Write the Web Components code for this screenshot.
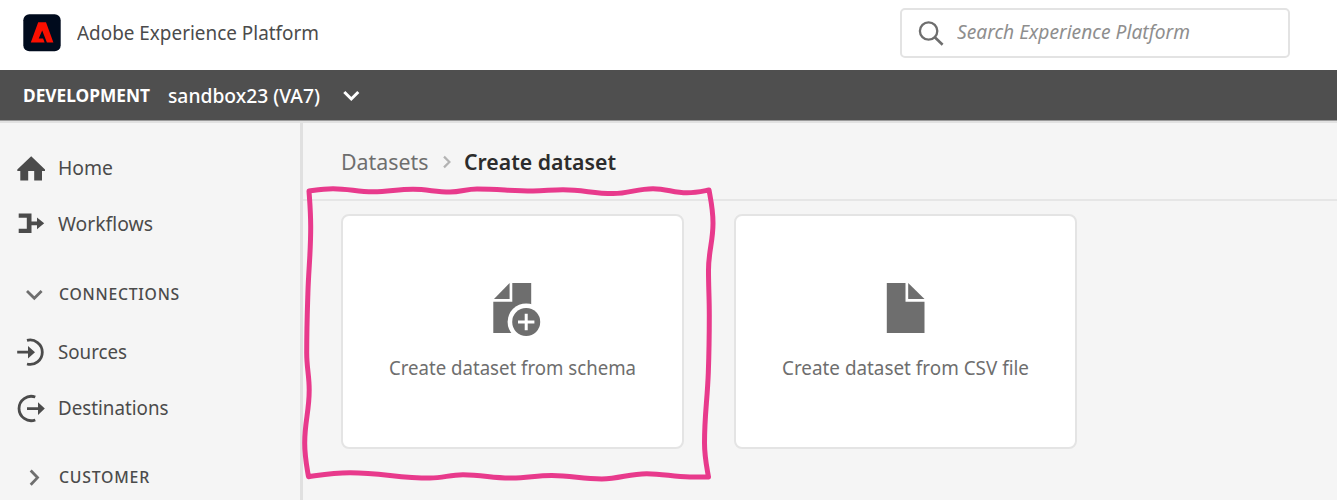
<!DOCTYPE html>
<html lang="en">
<head>
<meta charset="utf-8">
<title>Adobe Experience Platform</title>
<style>
html,body{margin:0;height:501px;overflow:hidden;background:#fff}
body{font-family:"Noto Sans","Open Sans",sans-serif;color:#4b4b4b}
</style>
</head>
<body>
<platform-app></platform-app>
<script>
const define = (name, html, setup) => {
  const t = document.createElement('template');
  t.innerHTML = html;
  customElements.define(name, class extends HTMLElement {
    constructor() {
      super();
      this.attachShadow({mode: 'open'}).append(t.content.cloneNode(true));
    }
    connectedCallback() { if (setup) setup(this, this.shadowRoot); }
  });
};

// A single-line label condensed to an exact advance width.
define('fit-text', `<style>
  :host{display:block;flex:none;white-space:nowrap;line-height:30px;height:30px}
  span{display:inline-block;transform-origin:0 50%}
</style><span><slot></slot></span>`, (el, root) => {
  const s = root.querySelector('span'), w = +el.getAttribute('w');
  el.style.width = w + 'px';
  s.style.transform = 'scaleX(' + w / s.getBoundingClientRect().width + ')';
});

define('app-header', `<style>
  :host{display:flex;height:70px;background:#fff;box-sizing:border-box;padding:0 47px 0 23px;align-items:flex-start}
  .logo{display:block;margin-top:14px}
  .name{margin:18px 0 0 16px;font-size:20px;color:#4b4b4b}
  .search{margin:8px 0 0 auto;width:390px;height:50px;box-sizing:border-box;border:2px solid #e3e3e3;border-radius:5px;display:flex}
  .search svg{margin:9px 0 0 15px}
  .search fit-text{margin:7px 0 0 12px;font-size:19.8px;font-style:italic;color:#8e8e8e}
</style>
<svg class="logo" width="38" height="38" viewBox="23 14 38 38"><rect x="23.3" y="14.3" width="37.4" height="37" rx="6" fill="#000b1d"/><path fill="#fa0f00" d="M38.2 22.3H46L53.4 42.4H46.9L42.2 30.5L38.7 38.4H43.1L44.6 42.4H30.8Z"/></svg>
<fit-text class="name" w="242">Adobe Experience Platform</fit-text>
<div class="search"><svg width="28" height="28" viewBox="917 19 28 28" fill="none" stroke="#6e6e6e" stroke-width="2.3"><circle cx="928.6" cy="31" r="8.7"/><path d="M934.8 37.2L942.6 44.8" stroke-width="2.6"/></svg><fit-text w="233">Search Experience Platform</fit-text></div>`);

define('sandbox-bar', `<style>
  :host{display:flex;height:50px;align-items:center;background:#4f4f4f;color:#fff;padding-left:23px;border-bottom:1px solid #9a9a9a;box-shadow:0 2px 0 #e1e1e1;position:relative}
  .env{font-size:17px;font-weight:700;padding-top:2px}
  .sb{font-size:20px;font-weight:500;margin-left:18px;padding-top:1px}
  svg{margin-left:21px}
</style>
<fit-text class="env" w="127">DEVELOPMENT</fit-text>
<fit-text class="sb" w="152">sandbox23 (VA7)</fit-text>
<svg width="20" height="20" viewBox="341 85 20 20" fill="none" stroke="#fff" stroke-width="3"><path d="M344.3 92L351.3 99L358.3 92"/></svg>`);

const icons = {
  home: '<path fill="#4b4b4b" d="M31.2 -11.8L45 1.4V3H42V12.4H34.2V3H28.2V12.4H20.3V3H17.3V1.4Z"/>',
  flow: '<path fill="#4b4b4b" d="M18.7 -10.5H31.5V-2.6H37V-6.6L44.2 -.7L37 5.2V1.2H31.5V9H18.7V4.7H26.8V-6.2H18.7Z"/>',
  source: '<path fill="none" stroke="#4b4b4b" stroke-width="2.8" d="M27 -11.6A12.2 12.2 0 1 1 27 12"/><path fill="#4b4b4b" d="M17.2 -1.2H28V-6L35 .2L28 6.4V1.6H17.2Z"/>',
  dest: '<path fill="none" stroke="#4b4b4b" stroke-width="2.8" d="M35.3 -11A12.2 12.2 0 1 0 35.3 12"/><path fill="#4b4b4b" d="M27 -.8H38V-5.7L44.8 .6L38 6.9V2H27Z"/>',
  down: '<path fill="none" stroke="#6e6e6e" stroke-width="2.8" d="M27 -3L34.3 4.2L41.6 -3"/>',
  right: '<path fill="none" stroke="#6e6e6e" stroke-width="2.8" d="M30.7 -6.5L37.5 .6L30.7 7.7"/>'
};
define('nav-icon', `<style>:host{display:block;flex:none;width:58px;height:36px}svg{display:block}</style><svg width="58" height="36" viewBox="0 -18 58 36"></svg>`,
  (el, root) => { root.querySelector('svg').innerHTML = icons[el.getAttribute('name')]; });

define('side-nav', `<style>
  :host{display:block;flex:none;width:300px;border-right:3px solid #e0e0e0;padding-top:17px;height:360px;overflow:hidden}
  .row{display:flex;align-items:center;height:56px;font-size:20px}
  .sec{margin-top:13px;height:58px;font-size:16.6px;font-weight:500}
  .sec + .row{margin-top:1px}
  .sec fit-text{margin-left:1px;letter-spacing:.8px}
  .sec.last{margin-top:12px}
</style>
<div class="row"><nav-icon name="home"></nav-icon><fit-text w="55">Home</fit-text></div>
<div class="row"><nav-icon name="flow"></nav-icon><fit-text w="95">Workflows</fit-text></div>
<div class="row sec"><nav-icon name="down"></nav-icon><fit-text w="121">CONNECTIONS</fit-text></div>
<div class="row"><nav-icon name="source"></nav-icon><fit-text w="69">Sources</fit-text></div>
<div class="row"><nav-icon name="dest"></nav-icon><fit-text w="110.5">Destinations</fit-text></div>
<div class="row sec last"><nav-icon name="right"></nav-icon><fit-text w="91">CUSTOMER</fit-text></div>`);

define('bread-crumbs', `<style>
  :host{display:flex;align-items:center;height:78px;box-sizing:border-box;padding:0 0 0 38px;border-bottom:2px solid #e6e6e6;font-size:22px;color:#6e6e6e}
  svg{margin:1px 11px 0 12px}
  .cur{font-weight:600;color:#2c2c2c}
</style>
<fit-text w="87.5">Datasets</fit-text>
<svg width="12" height="16" viewBox="441 155 12 16" fill="none" stroke="#b3b3b3" stroke-width="2.2"><path d="M444 157.6L449.4 163L444 168.4"/></svg>
<fit-text class="cur" w="152">Create dataset</fit-text>`);

const art = {
  schema: '<path d="M494 299L509.6 283V299Z"/><path d="M512.3 283H531.2V333H493.3V301.7H512.3Z"/><circle cx="526.2" cy="322" r="18.6" fill="#fff"/><circle cx="526.2" cy="322" r="14"/><path d="M518 322H534.4M526.2 313.8V330.2" stroke="#fff" stroke-width="3"/>',
  file: '<g transform="translate(-393.5 0)"><path d="M887.3 283H906V301.7H925V333H887.3Z"/><path d="M908.7 283L925 299H908.7Z"/></g>'
};
define('choice-card', `<style>
  :host{display:flex;flex-direction:column;align-items:center;box-sizing:border-box;width:343px;height:235px;border:2px solid #e4e4e4;border-radius:8px;background:#fff;font-size:20px;color:#6e6e6e;padding-top:62px}
  svg{display:block;flex:none;margin-bottom:15px}
</style><svg width="65" height="60" viewBox="480 278 65 60" fill="#6e6e6e"></svg><slot></slot>`,
  (el, root) => { root.querySelector('svg').innerHTML = art[el.getAttribute('art')]; });

// Hand-drawn frame: a smooth curve through each side's points.
define('sketch-frame', `<style>:host{position:absolute;left:0;top:0;pointer-events:none}svg{display:block}</style>
<svg width="760" height="501" fill="none" stroke="#e83a8c" stroke-width="5" stroke-linejoin="round"><path/></svg>`, (el, root) => {
  const sides = [
    [[309,191],[333,188.7],[373,191.8],[413,189.3],[450,192],[477,189],[533,191],[563,189.7],[613,193.6],[653,188.7],[687,192.8],[709,190]],
    [[709,190],[713,223],[708.5,270],[709.3,315],[708.3,373],[704.5,443],[708.5,477]],
    [[708.5,477],[690,477],[646.7,473.7],[601.7,478.9],[551.7,475.5],[511.7,478],[463,474.8],[430,478],[350,472.8],[308.5,476.7]],
    [[308.5,476.7],[304.7,443],[309.2,390],[306.7,353],[307.9,293],[310.7,227],[309,191]]
  ];
  let d = 'M309 191';
  sides.forEach((p, k) => {
    const a = k % 2, b = 1 - a;
    for (let i = 0; i < p.length - 1; i++) {
      const s = p[i], e = p[i + 1], c1 = [...s], c2 = [...e], run = e[a] - s[a];
      const cross = j => {
        if (j === 0 || j === p.length - 1) return null;
        const u = p[j][b] - p[j-1][b], v = p[j+1][b] - p[j][b];
        return u * v <= 0 ? 0 : (p[j+1][b] - p[j-1][b]) / (p[j+1][a] - p[j-1][a]);
      };
      const m = (e[b] - s[b]) / run, m1 = cross(i) ?? m * 1.5, m2 = cross(i + 1) ?? m * 1.5;
      c1[a] += run * .4; c1[b] += m1 * run * .4;
      c2[a] -= run * .4; c2[b] -= m2 * run * .4;
      d += 'C' + [c1, c2, e].map(q => q.join(' ')).join(' ');
    }
  });
  root.querySelector('path').setAttribute('d', d + 'Z');
});

define('platform-app', `<style>
  :host{display:block;position:relative;width:1337px;height:501px;overflow:hidden;background:#fff}
  .body{display:flex;height:379px;background:#f5f5f5}
  main{flex:1;padding-top:2px}
  .cards{display:flex;gap:50px;padding:13px 0 0 38px}
  side-nav{margin-top:2px}
</style>
<app-header></app-header>
<sandbox-bar></sandbox-bar>
<div class="body">
  <side-nav></side-nav>
  <main>
    <bread-crumbs></bread-crumbs>
    <div class="cards">
      <choice-card art="schema"><fit-text w="247">Create dataset from schema</fit-text></choice-card>
      <choice-card art="file"><fit-text w="247">Create dataset from CSV file</fit-text></choice-card>
    </div>
  </main>
</div>
<sketch-frame></sketch-frame>`);
</script>
</body>
</html>
